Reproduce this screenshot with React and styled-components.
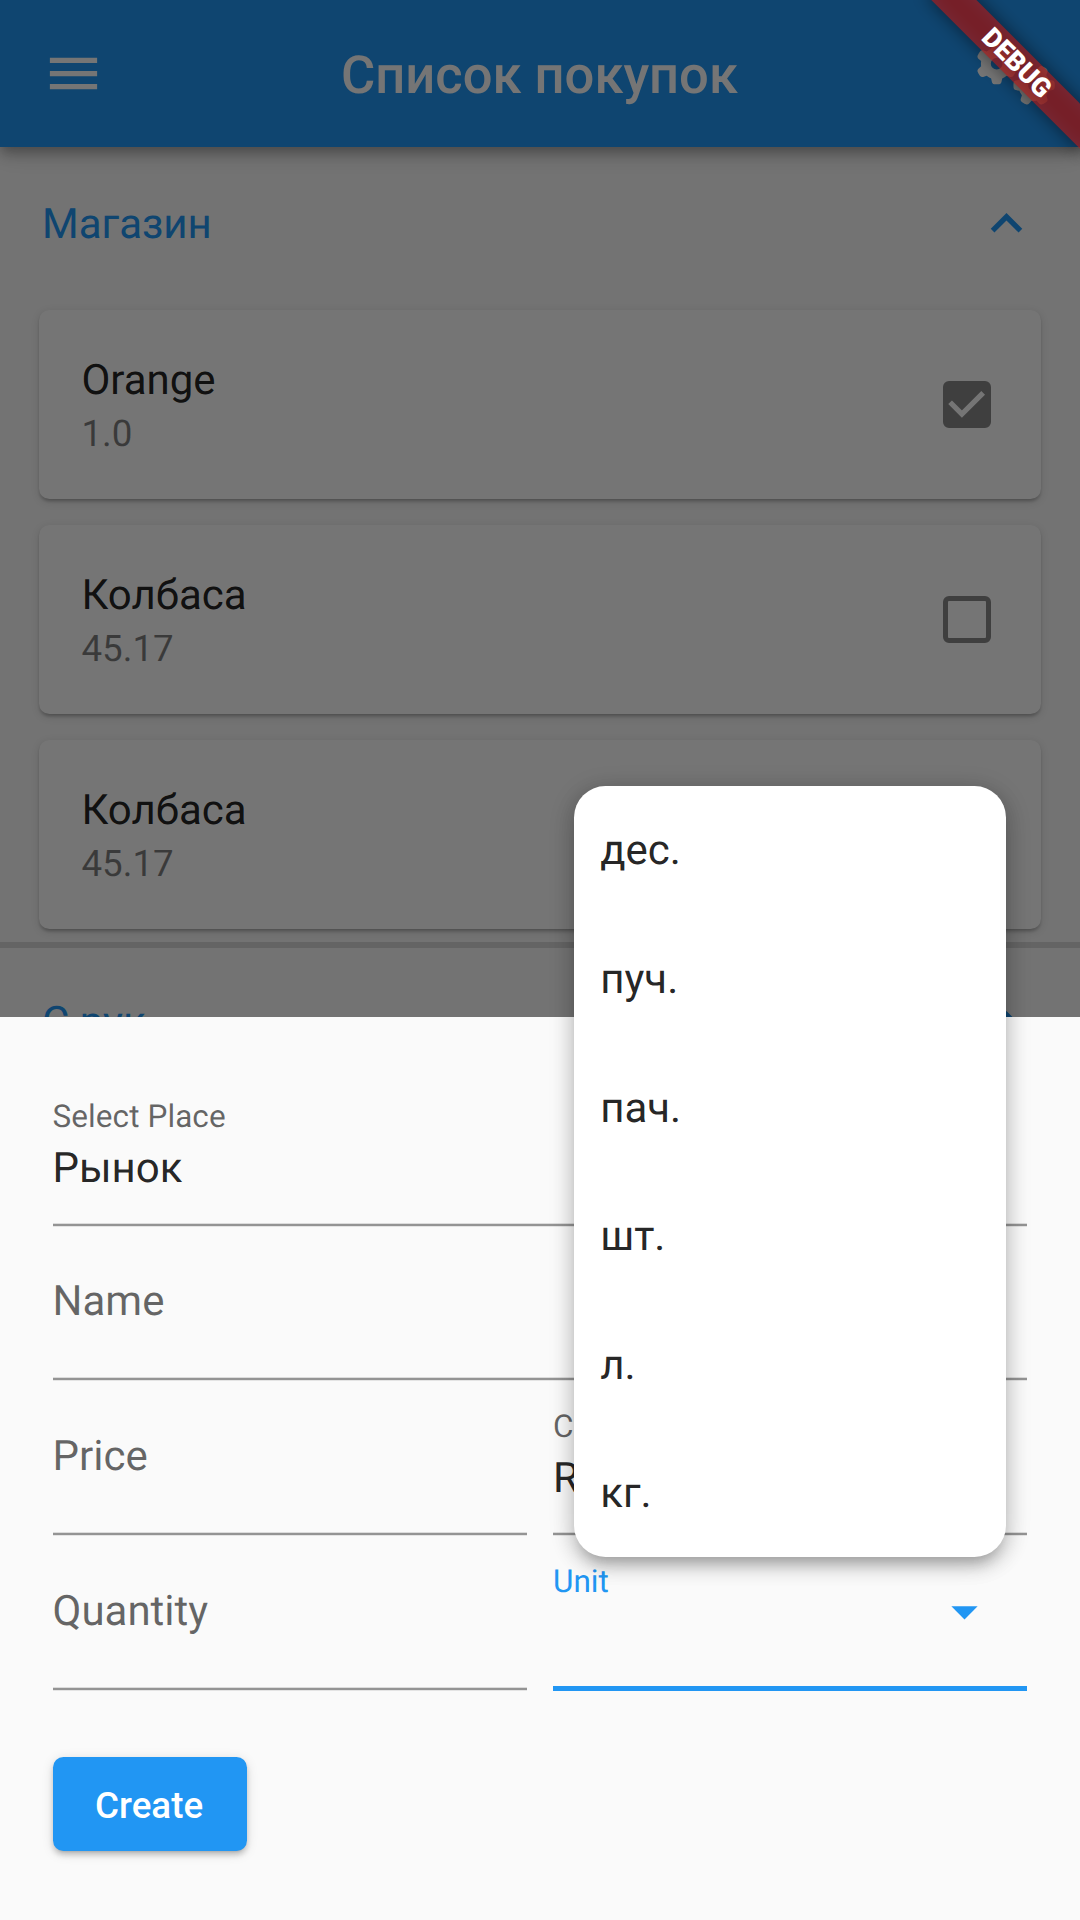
import React from "react";
import styled, { createGlobalStyle } from "styled-components";
import { FaGears } from "react-icons/fa6";

const BLUE = "#2196f3";

const GlobalStyle = createGlobalStyle`
  * { box-sizing: border-box; }
  html, body { margin: 0; padding: 0; overflow: hidden; }
  body {
    font-family: Roboto, "Noto Sans", sans-serif;
    font-size: 42px;
    line-height: 49.2px;
    color: rgba(0, 0, 0, 0.87);
    text-rendering: geometricPrecision;
    -webkit-font-smoothing: antialiased;
  }
`;

const Screen = styled.div`
  position: relative;
  width: 1080px;
  height: 1920px;
  overflow: hidden;
  background: #fafafa;
`;

const AppBar = styled.header`
  position: relative;
  z-index: 1;
  display: flex;
  align-items: center;
  justify-content: space-between;
  height: 147px;
  padding: 0 24.3px 0 42px;
  background: ${BLUE};
  color: #fff;
  box-shadow: 0 5px 10px -2px rgba(0, 0, 0, 0.2), 0 10px 13px rgba(0, 0, 0, 0.14),
    0 2px 26px rgba(0, 0, 0, 0.12);
`;

const BarSlot = styled.div`
  display: flex;
  justify-content: ${(p) => (p.$end ? "flex-end" : "flex-start")};
  width: ${(p) => (p.$end ? "218.7px" : "200px")};
`;

const Title = styled.h1`
  margin: 0;
  padding-top: 5px;
  font-size: 52.5px;
  font-weight: 500;
  line-height: 61.5px;
`;

const Icon = styled.svg`
  display: block;
  flex: none;
  width: 63px;
  height: 63px;
  fill: ${(p) => p.$color || "currentColor"};
`;

const Gears = styled(FaGears)`
  display: block;
  width: 78.75px;
  height: 63px;
`;

const Section = styled.section`
  border-bottom: 6px solid rgba(0, 0, 0, 0.12);
  margin-bottom: -3px;
  padding-bottom: 13px;
`;

const SectionHeader = styled.div`
  display: flex;
  align-items: center;
  justify-content: space-between;
  height: 153px;
  padding: 0 42px;
  color: ${BLUE};
`;

const SectionTitle = styled.span`
  padding-top: 2px;
`;

const CardList = styled.div`
  display: flex;
  flex-direction: column;
  gap: 26px;
  padding: 9.9px 39.4px 0;
`;

const Card = styled.article`
  display: flex;
  align-items: center;
  justify-content: space-between;
  height: 189px;
  padding: 0 42px;
  border-radius: 10.5px;
  background: #fff;
  box-shadow: 0 5px 3px -5px rgba(0, 0, 0, 0.2), 0 2.6px 2.6px rgba(0, 0, 0, 0.14),
    0 2.6px 8px rgba(0, 0, 0, 0.12);
`;

const CardText = styled.div`
  display: flex;
  flex-direction: column;
  gap: 7px;
  padding-top: 3px;
`;

const Subtitle = styled.span`
  font-size: 36.75px;
  line-height: 43px;
  color: rgba(0, 0, 0, 0.5);
`;

const Box = styled.span`
  display: flex;
  width: 47.25px;
  height: 47.25px;
  margin-right: 8px;
  border: 5.25px solid #8a8a8a;
  border-radius: 6px;
  background: ${(p) => (p.$checked ? "#8a8a8a" : "transparent")};
`;

const Tick = styled.svg`
  flex: none;
  width: 47.25px;
  height: 47.25px;
  margin: -5.25px;
  fill: none;
  stroke: #fff;
  stroke-width: 2;
`;

const Scrim = styled.div`
  position: absolute;
  inset: 0;
  z-index: 2;
  background: rgba(0, 0, 0, 0.54);
`;

const Sheet = styled.form`
  position: absolute;
  left: 0;
  right: 0;
  bottom: 0;
  z-index: 3;
  height: 903px;
  padding: 54.7px 53px 0 52.5px;
  background: #fafafa;
`;

const FieldRow = styled.div`
  display: grid;
  grid-template-columns: ${(p) => (p.$split ? "1fr 1fr" : "1fr")};
  column-gap: 26.25px;
`;

const FieldBox = styled.div`
  display: flex;
  justify-content: space-between;
  height: 154.875px;
  background: ${(p) =>
    p.$focused
      ? `linear-gradient(${BLUE}, ${BLUE}) bottom / 100% 5px no-repeat`
      : "linear-gradient(#dcdcdc 1px, #949494 1px, #949494 3px, #e4e4e4 3px) bottom / 100% 4px no-repeat"};
`;

const FieldText = styled.div`
  display: flex;
  flex-direction: column;
  gap: 8.3px;
  padding-top: 27.3px;
`;

const Label = styled.span`
  font-size: 31.5px;
  line-height: 36.9px;
  letter-spacing: 0.08px;
  color: ${(p) => (p.$focused ? BLUE : "rgba(0, 0, 0, 0.6)")};
`;

const Placeholder = styled.span`
  padding-top: 23px;
  color: rgba(0, 0, 0, 0.6);
`;

const Arrow = styled.span`
  padding: 43.3px 30.8px 0 0;
`;

const CreateButton = styled.button`
  display: flex;
  align-items: center;
  justify-content: center;
  width: 194.3px;
  height: 94.5px;
  margin-top: 65.8px;
  padding: 2px 1.2px 0 0;
  border: 0;
  border-radius: 10.5px;
  background: ${BLUE};
  color: #fff;
  font: 500 36.75px/43px Roboto, sans-serif;
  box-shadow: 0 5px 3px -5px rgba(0, 0, 0, 0.2), 0 4px 5px rgba(0, 0, 0, 0.16),
    0 2.6px 12px rgba(0, 0, 0, 0.13);
`;

const Menu = styled.ul`
  position: absolute;
  z-index: 4;
  top: 785.6px;
  left: 574.2px;
  width: 432.2px;
  margin: 0;
  padding: 0;
  list-style: none;
  border-radius: 31.5px;
  background: #fff;
  box-shadow: 0 13px 13px -8px rgba(0, 0, 0, 0.2), 0 8px 20px 2px rgba(0, 0, 0, 0.14),
    0 4px 24px 3px rgba(0, 0, 0, 0.12);
`;

const MenuItem = styled.li`
  display: flex;
  align-items: center;
  height: 128.625px;
  padding: 2px 26.25px 0 26px;
`;

const Ribbon = styled.div`
  position: absolute;
  z-index: 5;
  top: 47.35px;
  left: 906.9px;
  width: 220px;
  height: 31.5px;
  transform: rotate(45deg);
  color: #fff;
  font-size: 26.8px;
  font-weight: 900;
  line-height: 32px;
  text-align: center;

  &::before,
  &::after {
    content: "";
    position: absolute;
    inset: 0;
  }

  &::before {
    z-index: -2;
    background: rgba(0, 0, 0, 0.5);
    filter: blur(9px);
  }

  &::after {
    z-index: -1;
    background: rgba(183, 28, 28, 0.627);
  }
`;

const items = [
  { name: "Orange", price: "1.0", checked: true },
  { name: "Колбаса", price: "45.17" },
  { name: "Колбаса", price: "45.17" },
];
const units = ["дес.", "пуч.", "пач.", "шт.", "л.", "кг."];

function ChevronUp() {
  return (
    <Icon viewBox="0 0 24 24">
      <path d="M12 8l-6 6 1.41 1.41L12 10.83l4.59 4.58L18 14z" />
    </Icon>
  );
}

function DropArrow({ color }) {
  return (
    <Arrow>
      <Icon viewBox="0 0 24 24" $color={color}>
        <path d="M7 10l5 5 5-5z" />
      </Icon>
    </Arrow>
  );
}

function CheckBox({ checked }) {
  return (
    <Box $checked={checked}>
      {checked && (
        <Tick viewBox="0 0 18 18">
          <path d="M2.7 8.1L7.2 12.6L15.3 4.5" />
        </Tick>
      )}
    </Box>
  );
}

function Field({ label, value, select, focused }) {
  const floating = value || focused;
  return (
    <FieldBox $focused={focused}>
      <FieldText>
        {floating ? <Label $focused={focused}>{label}</Label> : <Placeholder>{label}</Placeholder>}
        {value && <span>{value}</span>}
      </FieldText>
      {select && <DropArrow color={focused ? BLUE : "#757575"} />}
    </FieldBox>
  );
}

export default function App() {
  return (
    <Screen>
      <GlobalStyle />
      <AppBar>
        <BarSlot>
          <Icon viewBox="0 0 24 24">
            <path d="M3 18h18v-2H3v2zm0-5h18v-2H3v2zm0-7v2h18V6H3z" />
          </Icon>
        </BarSlot>
        <Title>Список покупок</Title>
        <BarSlot $end>
          <Gears />
        </BarSlot>
      </AppBar>

      <Section>
        <SectionHeader>
          <SectionTitle>Магазин</SectionTitle>
          <ChevronUp />
        </SectionHeader>
        <CardList>
          {items.map((item, i) => (
            <Card key={i}>
              <CardText>
                <span>{item.name}</span>
                <Subtitle>{item.price}</Subtitle>
              </CardText>
              <CheckBox checked={item.checked} />
            </Card>
          ))}
        </CardList>
      </Section>
      <SectionHeader>
        <SectionTitle>С рук</SectionTitle>
        <ChevronUp />
      </SectionHeader>

      <Scrim />

      <Sheet>
        <FieldRow>
          <Field label="Select Place" value="Рынок" select />
        </FieldRow>
        <FieldRow>
          <Field label="Name" />
        </FieldRow>
        <FieldRow $split>
          <Field label="Price" />
          <Field label="C" value="R" />
        </FieldRow>
        <FieldRow $split>
          <Field label="Quantity" />
          <Field label="Unit" select focused />
        </FieldRow>
        <CreateButton type="button">Create</CreateButton>
      </Sheet>

      <Menu>
        {units.map((u) => (
          <MenuItem key={u}>{u}</MenuItem>
        ))}
      </Menu>

      <Ribbon>DEBUG</Ribbon>
    </Screen>
  );
}
